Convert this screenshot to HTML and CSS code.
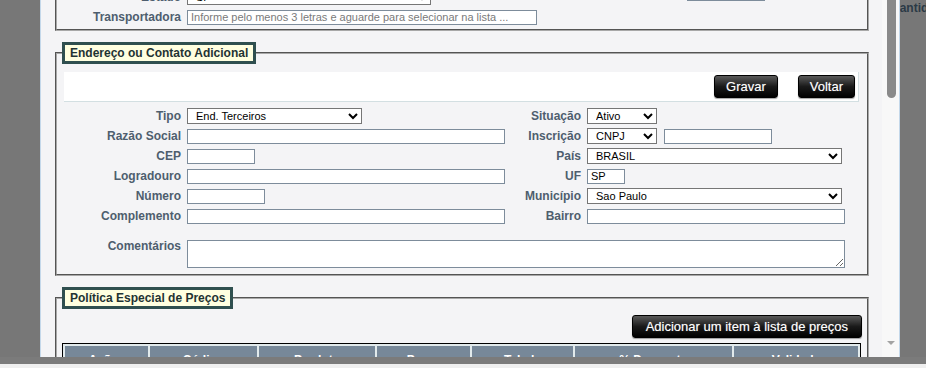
FILE: index.html
```html
<!DOCTYPE html>
<html>
<head>
  <meta charset="utf-8">
  <title>Endereço ou Contato Adicional</title>
  <link rel="stylesheet" href="styles.css">
</head>
<body>
  <div class="screen">
    <div class="backdrop"></div>

    <div class="dialog">
      <div class="dialog-body">
        <div class="dialog-content">

          <!-- previous section, scrolled mostly out of view -->
          <fieldset class="box box-prev">
            <div class="form-grid">
              <label class="lbl">Estado</label>
              <div class="field"><select class="sel w-estado"><option>SP</option></select></div>
              <div></div>
              <div class="field field-top"><input class="txt w-fone" type="text"></div>

              <label class="lbl">Transportadora</label>
              <div class="field span-3"><input class="txt w-transp" type="text" placeholder="Informe pelo menos 3 letras e aguarde para selecionar na lista ..."></div>
            </div>
          </fieldset>

          <fieldset class="box">
            <legend class="box-title">Endereço ou Contato Adicional</legend>
            <div class="box-inner">
              <div class="toolbar">
                <button class="btn">Gravar</button>
                <button class="btn">Voltar</button>
              </div>

              <div class="form-grid form-main">
                <label class="lbl">Tipo</label>
                <div class="field"><select class="sel w-tipo"><option>End. Terceiros</option></select></div>
                <label class="lbl">Situação</label>
                <div class="field"><select class="sel w-sit"><option>Ativo</option></select></div>

                <label class="lbl">Razão Social</label>
                <div class="field"><input class="txt w-long" type="text"></div>
                <label class="lbl">Inscrição</label>
                <div class="field field-pair">
                  <select class="sel w-sit"><option>CNPJ</option></select>
                  <input class="txt w-insc" type="text">
                </div>

                <label class="lbl">CEP</label>
                <div class="field"><input class="txt w-cep" type="text"></div>
                <label class="lbl">País</label>
                <div class="field"><select class="sel w-pais"><option>BRASIL</option></select></div>

                <label class="lbl">Logradouro</label>
                <div class="field"><input class="txt w-long" type="text"></div>
                <label class="lbl">UF</label>
                <div class="field"><input class="txt w-uf" type="text" value="SP"></div>

                <label class="lbl">Número</label>
                <div class="field"><input class="txt w-num" type="text"></div>
                <label class="lbl">Município</label>
                <div class="field"><select class="sel w-pais"><option>Sao Paulo</option></select></div>

                <label class="lbl">Complemento</label>
                <div class="field"><input class="txt w-long" type="text"></div>
                <label class="lbl">Bairro</label>
                <div class="field"><input class="txt w-bairro" type="text"></div>
              </div>

              <div class="form-grid form-notes">
                <label class="lbl lbl-top">Comentários</label>
                <div class="field span-3"><textarea class="txt w-notes"></textarea></div>
              </div>
            </div>
          </fieldset>

          <fieldset class="box box-prices">
            <legend class="box-title">Política Especial de Preços</legend>
            <div class="actions">
              <button class="btn btn-wide">Adicionar um item à lista de preços</button>
            </div>
            <table class="grid">
              <colgroup>
                <col style="width:83px">
                <col style="width:107px">
                <col style="width:116px">
                <col style="width:93px">
                <col style="width:101px">
                <col style="width:157px">
                <col style="width:124px">
              </colgroup>
              <thead>
                <tr>
                  <th>Ações</th>
                  <th>Código</th>
                  <th>Produto</th>
                  <th>Preço</th>
                  <th>Tabela</th>
                  <th>% Desconto</th>
                  <th>Validade</th>
                </tr>
              </thead>
              <tbody>
                <tr><td colspan="7">&nbsp;</td></tr>
              </tbody>
            </table>
          </fieldset>

        </div>
      </div>

      <div class="scrollbar">
        <div class="thumb"></div>
        <div class="arrow-down"></div>
      </div>
    </div>

    <div class="backdrop backdrop-right">
      <span class="behind-text">Quantidade</span>
    </div>
  </div>
  <div class="strip-dark"></div>
  <div class="strip-light"></div>
</body>
</html>
```

FILE: styles.css
```css
body {
  margin: 0;
  background-color: #777;
  font-family: "Liberation Sans", Arial, sans-serif;
  overflow: hidden;
}
.screen {
  display: flex;
  height: 357px;
}
.backdrop {
  width: 40px;
  background-color: #777;
}
.backdrop-right {
  flex: 1;
  overflow: hidden;
  white-space: nowrap;
}
.behind-text {
  display: block;
  margin: 1px 0 0 -17px;
  font-size: 12px;
  font-weight: bold;
  color: #2b3a46;
}
.dialog {
  display: flex;
  width: 858px;
  border-left: 1px solid #c4d8ea;
  border-right: 1px solid #c4d8ea;
  background-color: #f4f4f6;
}
.dialog-body {
  width: 841px;
  overflow: hidden;
}
.dialog-content {
  margin-top: -13px;
}
.scrollbar {
  flex: 1;
  display: flex;
  flex-direction: column;
  align-items: center;
  background-color: #f8f8f8;
}
.thumb {
  width: 9px;
  height: 98px;
  margin-left: 1px;
  background-color: #8a8a8a;
  border-radius: 0 0 5px 5px;
}
.arrow-down {
  margin-top: auto;
  margin-bottom: 12px;
  width: 0;
  height: 0;
  border-left: 4px solid transparent;
  border-right: 4px solid transparent;
  border-top: 4px solid #a3a3a3;
}

/* sections */
.box {
  margin: 11px 13px 0 14px;
  padding: 8px 8px 6px 5px;
  border: 2px groove #a8a8a8;
  min-width: 0;
}
.box-prev {
  margin-top: 0;
  padding-top: 0;
  padding-bottom: 2px;
  border-top: 0;
}
.box-title {
  padding: 1px 5px;
  line-height: 14px;
  font-size: 12px;
  font-weight: bold;
  color: #1f3333;
  background-color: #ffffe0;
  border: 3px solid #2f4f4f;
}
.box-inner {
  margin-left: 2px;
}
.box-prev .form-grid {
  margin-left: 2px;
}
.toolbar {
  display: flex;
  justify-content: flex-end;
  gap: 20px;
  padding: 3px 3px 3px 0;
  background-color: #fff;
  border-right: 1px solid #d3dfe2;
  border-bottom: 1px solid #d3dfe2;
}
.btn {
  height: 23px;
  padding: 0 11px;
  font-family: "Liberation Sans", Arial, sans-serif;
  font-size: 13px;
  color: #fff;
  background: linear-gradient(#5a5a5a, #1a1a1a 50%, #000);
  border: 1px solid #000;
  border-radius: 3px;
  box-shadow: 0 1px 1px rgba(0, 0, 0, 0.35);
  text-shadow: 0 0 1px rgba(255, 255, 255, 0.45);
  cursor: pointer;
}
.btn-wide {
  padding: 0 13px;
}

/* form rows */
.form-grid {
  display: grid;
  grid-template-columns: 117px 328px 60px 1fr;
  grid-auto-rows: 20px;
  column-gap: 6px;
  align-items: center;
}
.form-main {
  margin-top: 4px;
}
.form-notes {
  margin-top: 14px;
  grid-auto-rows: auto;
  align-items: start;
}
.lbl {
  text-align: right;
  font-size: 12px;
  font-weight: bold;
  color: #4e5e6e;
  white-space: nowrap;
}
.lbl-top {
  margin-top: -1px;
}
.field {
  display: flex;
  align-items: center;
}
.field-pair {
  gap: 7px;
}
.field-top {
  align-self: start;
  margin: -1px 0 0 100px;
}
.span-3 {
  grid-column: 2 / 5;
}
.txt {
  box-sizing: border-box;
  height: 15px;
  padding: 0 3px;
  font-family: "Liberation Sans", Arial, sans-serif;
  font-size: 11px;
  color: #000;
  background-color: #fff;
  border: 1px solid #7d8c9b;
  border-radius: 0;
}
.txt::placeholder {
  color: #7a7a7a;
}
textarea.txt {
  height: 28px;
  padding: 2px 3px;
}
.sel {
  box-sizing: border-box;
  height: 16px;
  padding: 0 0 0 4px;
  font-family: "Liberation Sans", Arial, sans-serif;
  font-size: 11px;
  color: #000;
  background-color: #fff;
}
.w-estado { width: 244px; }
.w-fone { width: 78px; }
.w-transp { width: 350px; }
.w-tipo { width: 175px; }
.w-long { width: 318px; }
.w-cep { width: 68px; }
.w-num { width: 78px; }
.w-sit { width: 70px; }
.w-insc { width: 108px; }
.w-pais { width: 255px; }
.w-uf { width: 38px; }
.w-bairro { width: 258px; }
.w-notes { width: 658px; }

/* price list */
.box-prices {
  padding: 6px 6px 0 5px;
}
.actions {
  display: flex;
  justify-content: flex-end;
  margin-right: -1px;
  margin-bottom: 5px;
}
.grid {
  table-layout: fixed;
  width: 799px;
  border: 1px solid #000;
  border-spacing: 2px;
  background-color: #e2eaec;
}
.grid th {
  padding: 7px 4px 5px;
  line-height: 14px;
  font-size: 12px;
  font-weight: bold;
  color: #fff;
  background-color: #778899;
  text-align: center;
}
.grid td {
  height: 20px;
  background-color: #fff;
}

.strip-dark {
  height: 7px;
  background-color: #7b7b7b;
}
.strip-light {
  height: 4px;
  background-color: #efefef;
}
```
